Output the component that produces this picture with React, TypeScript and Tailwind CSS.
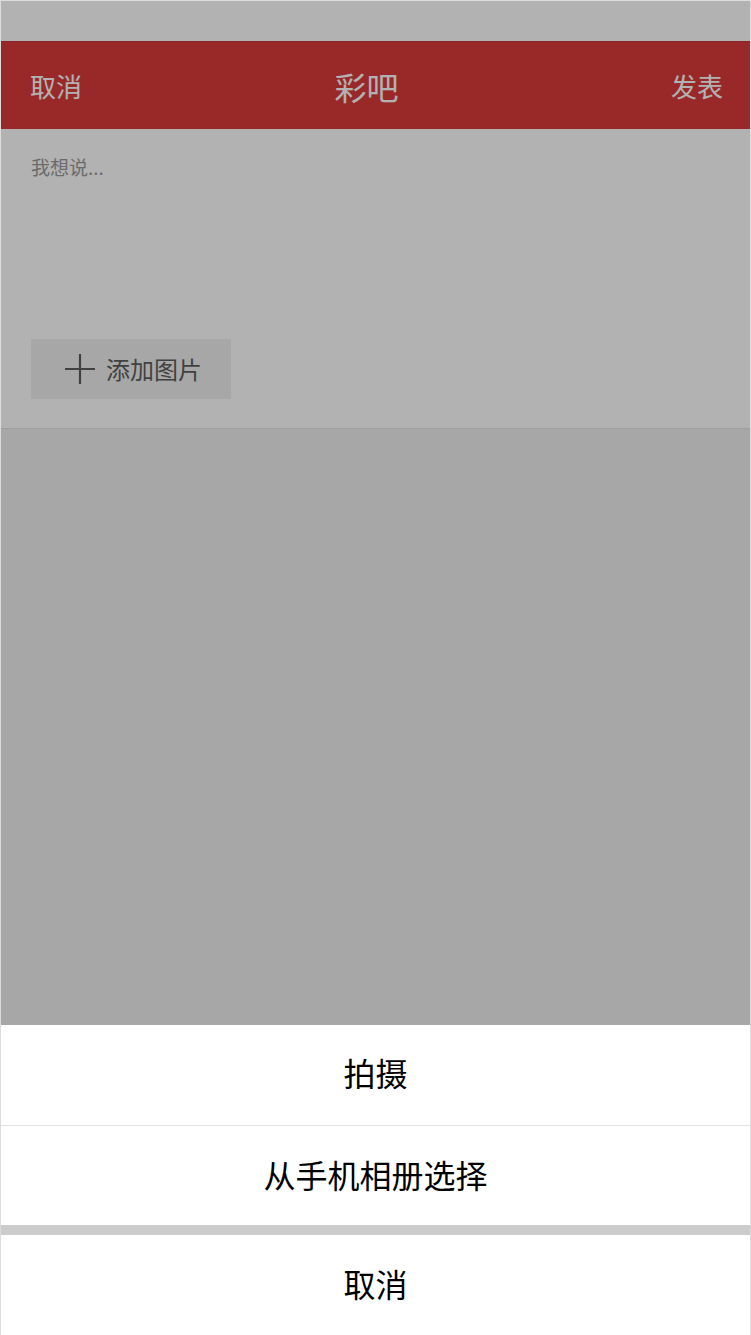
import React from "react";

export default function App() {
  return (
    <div
      className="relative h-[1335px] w-full overflow-hidden border-x border-t border-[#dcdcdc] bg-[#f0f0f0]"
      style={{ fontFamily: '"Noto Sans CJK SC", "Noto Sans", sans-serif' }}
    >
      <div className="h-[40px] bg-white" />
      <header className="flex h-[88px] items-center justify-between border-t border-[#c83434] bg-[#dc3c3c] pl-[29px] pr-[27px]">
        <span className="text-[26px] leading-none text-white">取消</span>
        <span className="mr-[20px] text-[32px] leading-none text-white">彩吧</span>
        <span className="text-[26px] leading-none text-white">发表</span>
      </header>
      <section className="h-[300px] border-b border-[#e4e4e4] bg-white px-[30px] pt-[28px]">
        <div className="text-[19px] leading-none text-[#9a9a9a]">我想说...</div>
        <button className="mt-[163px] flex h-[60px] w-[200px] items-center bg-[#f0f0f0] pl-[33px] text-[24px] text-[#5e5e5e]">
          <svg width="32" height="32" viewBox="0 0 32 32" className="mr-[10px]">
            <path d="M1 16H31M16 1V31" stroke="#5e5e5e" strokeWidth="2.2" />
          </svg>
          <span className="leading-none">添加图片</span>
        </button>
      </section>

      <div className="absolute inset-0 bg-black/30" />

      <div className="absolute inset-x-0 bottom-0 flex flex-col bg-white text-[32px] text-black">
        <div className="flex h-[101px] items-center justify-center border-b border-[#e3e3e3] pb-[6px]">
          <span className="leading-none">拍摄</span>
        </div>
        <div className="flex h-[99px] items-center justify-center pb-[4px]">
          <span className="leading-none">从手机相册选择</span>
        </div>
        <div className="h-[10px] bg-[#cccccc]" />
        <div className="flex h-[100px] items-center justify-center pb-[4px]">
          <span className="leading-none">取消</span>
        </div>
      </div>
    </div>
  );
}
